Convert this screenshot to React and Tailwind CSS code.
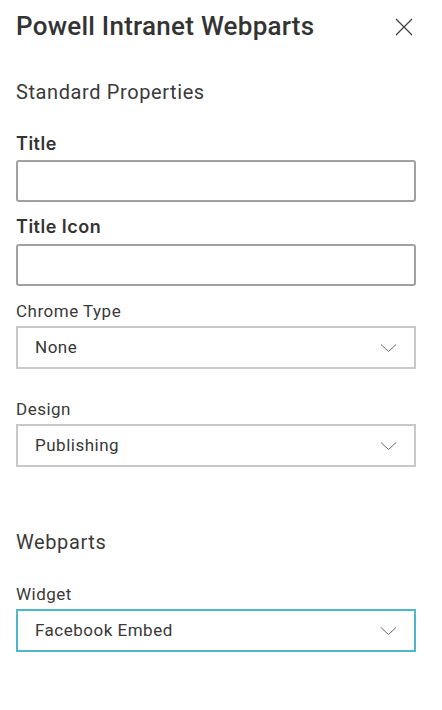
import React from "react";

const din = { fontFamily: "Roboto, 'Liberation Sans', sans-serif" };

function Chevron() {
  return (
    <svg width="17" height="10" viewBox="0 0 17 10" fill="none" className="shrink-0">
      <path d="M1 1.5 L8.5 8.5 L16 1.5" stroke="#6a6a6a" strokeWidth="1" />
    </svg>
  );
}

function Select({ value, focused }) {
  return (
    <div
      className={
        "flex items-center justify-between h-[43px] pl-[17px] pr-[17px] bg-white " +
        (focused ? "border-2 border-[#4fb6cb]" : "border-2 border-[#c8c8c8]")
      }
    >
      <span className="text-[17px] leading-none text-[#383838] tracking-[0.5px]" style={din}>
        {value}
      </span>
      <Chevron />
    </div>
  );
}

function Input() {
  return <div className="h-[42px] border-2 border-[#a0a0a0] rounded-[3px] bg-white" />;
}

const labelBold = { fontFamily: "Inter, 'Noto Sans', sans-serif" };

export default function App() {
  return (
    <div className="w-[442px] h-[710px] bg-white text-[#333] pl-4 pr-[26px] overflow-hidden" style={din}>
      <div className="flex items-center justify-between pt-[8px] h-[44px]">
        <h1 className="text-[26px] leading-[34px] font-medium text-[#333] tracking-[0.25px]" style={din}>
          Powell Intranet Webparts
        </h1>
        <svg width="18" height="18" viewBox="0 0 18 18" className="mr-[3px] mt-[2px]">
          <path d="M1 1 L17 17 M17 1 L1 17" stroke="#444" strokeWidth="1.3" />
        </svg>
      </div>

      <div className="mt-[34px] text-[20px] leading-[28px] tracking-[0.6px] text-[#3a3a3a]" style={din}>
        Standard Properties
      </div>

      <div className="mt-[26px] text-[18px] leading-[24px] font-semibold tracking-[0.5px] text-[#333]" style={labelBold}>
        Title
      </div>
      <div className="mt-[4px]">
        <Input />
      </div>

      <div className="mt-[13px] text-[18px] leading-[24px] font-semibold tracking-[0.5px] text-[#333]" style={labelBold}>
        Title Icon
      </div>
      <div className="mt-[5px]">
        <Input />
      </div>

      <div className="mt-[13px] text-[17px] leading-[24px] tracking-[0.5px] text-[#3a3a3a]" style={din}>
        Chrome Type
      </div>
      <div className="mt-[3px]">
        <Select value="None" />
      </div>

      <div className="mt-[28px] text-[17px] leading-[24px] tracking-[0.5px] text-[#3a3a3a]" style={din}>
        Design
      </div>
      <div className="mt-[3px]">
        <Select value="Publishing" />
      </div>

      <div className="mt-[61px] text-[20px] leading-[28px] tracking-[0.6px] text-[#3a3a3a]" style={din}>
        Webparts
      </div>

      <div className="mt-[26px] text-[17px] leading-[24px] tracking-[0.5px] text-[#3a3a3a]" style={din}>
        Widget
      </div>
      <div className="mt-[3px]">
        <Select value="Facebook Embed" focused />
      </div>
    </div>
  );
}
